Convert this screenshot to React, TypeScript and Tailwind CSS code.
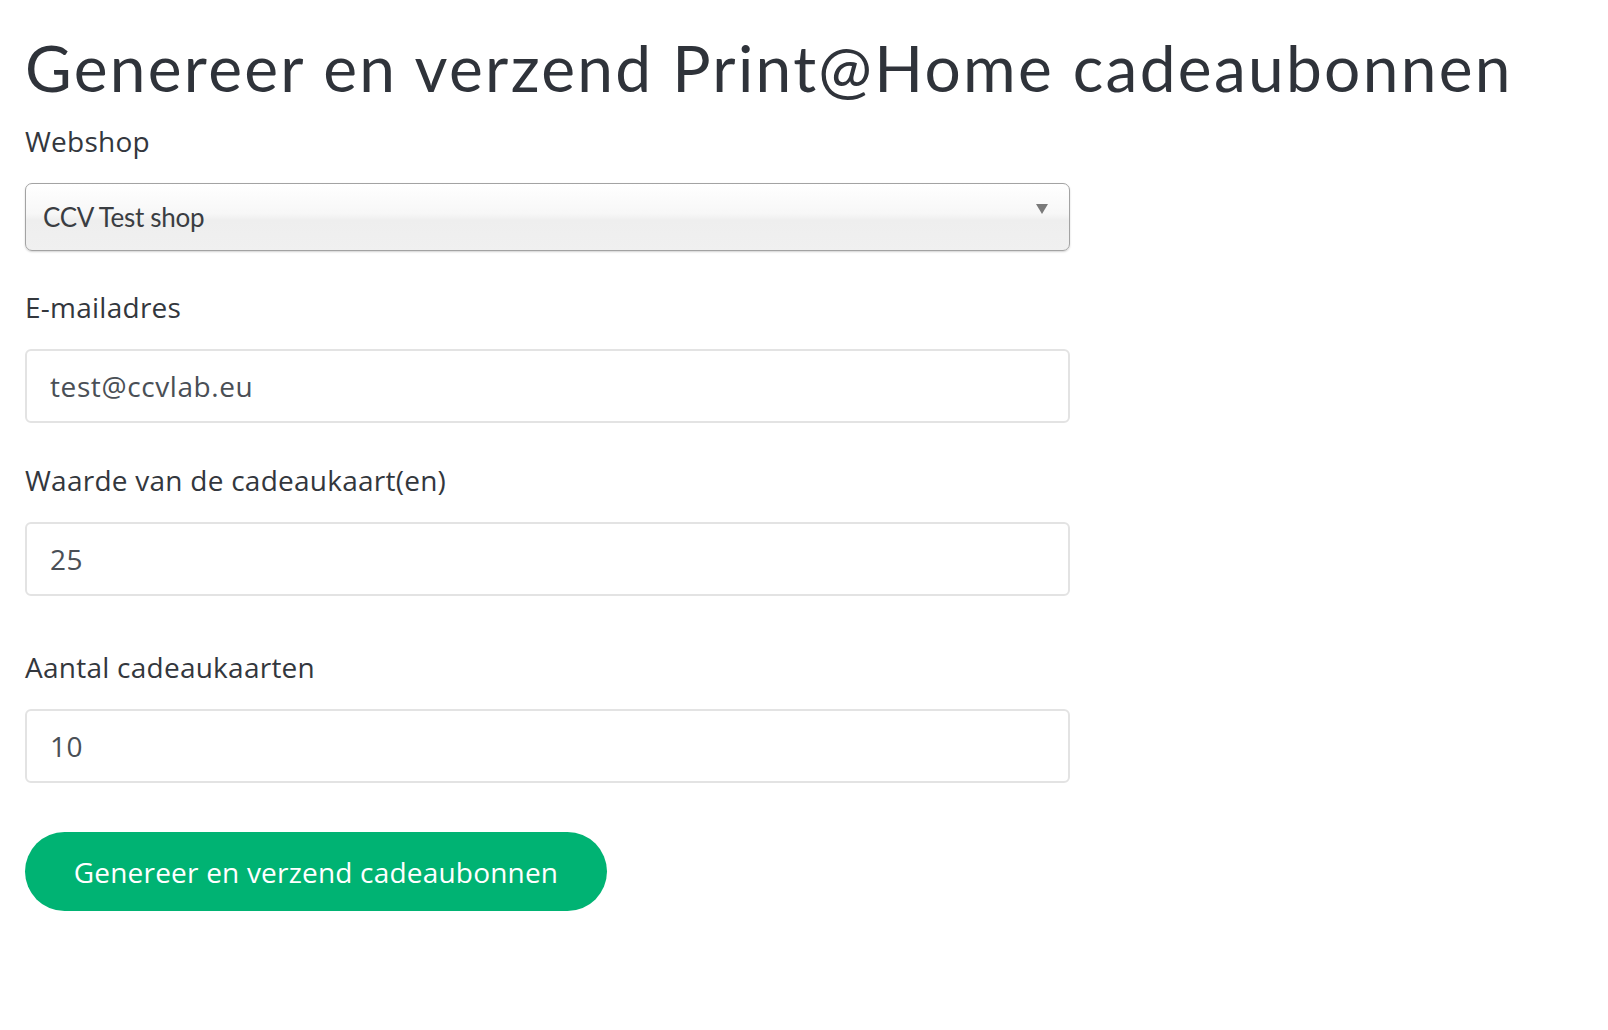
import React from 'react';

const fields = [
  { label: 'E-mailadres', value: 'test@ccvlab.eu', gap: 'mt-[38px]' },
  { label: 'Waarde van de cadeaukaart(en)', value: '25', gap: 'mt-[39px]' },
  { label: 'Aantal cadeaukaarten', value: '10', gap: 'mt-[53px]' },
];

const App = () => {
  return (
    <div className="min-h-screen bg-white pl-[25px] pt-[28px] font-['Open_Sans','Noto_Sans',sans-serif]">
      <h1 className="font-['Lato',sans-serif] text-[64px] leading-[80px] font-normal text-[#2f333a] tracking-[2.3px]">
        Genereer en verzend Print@Home cadeaubonnen
      </h1>

      <div className="w-[1045px]">
        <label className="mt-[15px] block text-[28px] leading-[36px] text-[#33373d] tracking-[0.25px]">
          Webshop
        </label>
        <div className="mt-[24px] flex h-[68px] items-center justify-between rounded-[7px] border border-[#a3a3a3] bg-[linear-gradient(#ffffff,#f7f7f7_45%,#eeeeee_55%,#f0f0f0)] pl-[17px] pr-[21px] shadow-[0_1px_2px_rgba(0,0,0,0.18)]">
          <span className="font-['Lato',sans-serif] text-[26px] text-[#3a3d42] tracking-[-0.3px]">CCV Test shop</span>
          <svg width="12" height="10" viewBox="0 0 12 10" className="-mt-[17px]">
            <path d="M0 0h12L6 10z" fill="#7a7a7a" />
          </svg>
        </div>

        {fields.map((field) => (
          <div key={field.label} className={field.gap}>
            <label className="block text-[28px] leading-[36px] text-[#33373d] tracking-[0.25px]">
              {field.label}
            </label>
            <input
              readOnly
              value={field.value}
              className="mt-[24px] block h-[74px] w-full rounded-[6px] border-2 border-[#e3e3e3] bg-white px-[23px] text-[28px] text-[#4a4f56] tracking-[0.6px] outline-none"
            />
          </div>
        ))}

        <button className="mt-[49px] flex h-[79px] w-[582px] items-center justify-center rounded-full bg-[#00b373] text-[28px] text-white tracking-[0.2px]">
          Genereer en verzend cadeaubonnen
        </button>
      </div>
    </div>
  );
};

export default App;
